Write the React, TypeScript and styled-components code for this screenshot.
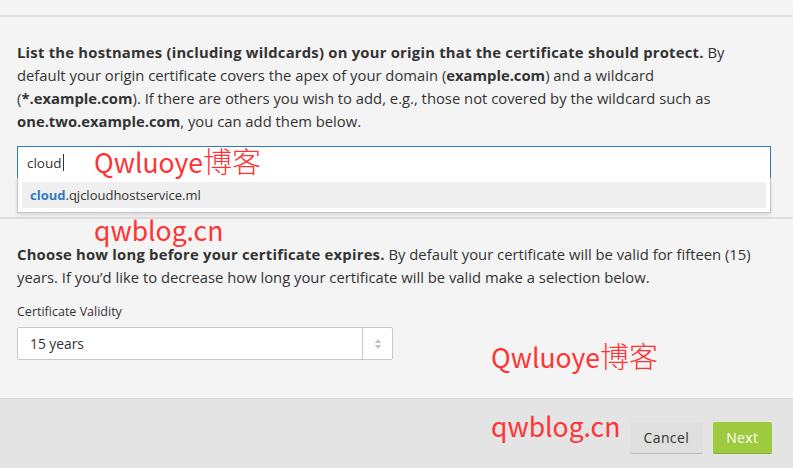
import styled, { createGlobalStyle } from "styled-components";

const GlobalStyle = createGlobalStyle`
  html, body {
    margin: 0;
    padding: 0;
    background: #f4f4f4;
  }
  body {
    font-family: "Open Sans", "Liberation Sans", sans-serif;
    color: #333;
  }
`;

const Page = styled.div`
  position: relative;
  width: 793px;
  height: 468px;
  overflow: hidden;
  display: flex;
  flex-direction: column;
  background: #f4f4f4;
`;

const TopStrip = styled.div`
  height: 15px;
  background: #f5f5f5;
  border-bottom: 2px solid #e0e0e0;
`;

const Section = styled.section<{ padTop: number; padBottom: number; divider?: boolean }>`
  padding: ${({ padTop, padBottom }) => `${padTop}px 22px ${padBottom}px 17px`};
  border-bottom: ${({ divider }) => (divider ? "2px solid #dedede" : "none")};
`;

const Text = styled.p`
  margin: 0;
  font-size: 14.8px;
  line-height: 23px;
  color: #333;

  b {
    font-weight: 700;
  }
`;

const Lead = styled.b`
  letter-spacing: 0.23px;
`;

const InputWrap = styled.div`
  position: relative;
  margin-top: 13px;
`;

const TextInput = styled.div`
  box-sizing: border-box;
  height: 32px;
  padding: 0 9px;
  display: flex;
  align-items: center;
  background: #fff;
  border: 1px solid #2f7bbf;
  border-bottom: none;
  font-size: 13.5px;
  color: #333;
`;

const Caret = styled.span`
  display: inline-block;
  width: 1px;
  height: 17px;
  margin-left: 1px;
  background: #333;
`;

const Menu = styled.div`
  position: absolute;
  left: 0;
  right: 0;
  top: 32px;
  box-sizing: border-box;
  padding: 4px;
  background: #fff;
  border: 1px solid #c4c4c4;
  border-top: none;
  box-shadow: 0 2px 4px rgba(0, 0, 0, 0.12);
`;

const MenuItem = styled.div`
  height: 26px;
  padding: 0 8px;
  display: flex;
  align-items: center;
  background: #efefef;
  font-size: 13px;
  color: #333;
`;

const Match = styled.span`
  font-weight: 700;
  color: #2f7bbf;
`;

const Label = styled.div`
  margin-top: 14px;
  font-size: 12.5px;
  line-height: 18px;
  color: #333;
`;

const Select = styled.div`
  box-sizing: border-box;
  margin-top: 6px;
  width: 376px;
  height: 33px;
  display: flex;
  background: #fff;
  border: 1px solid #c8c8c8;
  border-radius: 2px;
`;

const SelectValue = styled.div`
  flex: 1;
  display: flex;
  align-items: center;
  padding-left: 12px;
  font-size: 13.8px;
  color: #333;
`;

const SelectArrows = styled.div`
  width: 29px;
  border-left: 1px solid #c8c8c8;
  display: flex;
  align-items: center;
  justify-content: center;
`;

const Footer = styled.footer`
  flex: 1;
  display: flex;
  justify-content: flex-end;
  align-items: flex-start;
  gap: 10px;
  padding: 23px 21px 0 0;
  background: #e4e4e4;
  border-top: 1px solid #d6d6d6;
`;

const Button = styled.button<{ primary?: boolean }>`
  height: 32px;
  padding: 0 ${({ primary }) => (primary ? "13.5px" : "13.5px")};
  border: none;
  border-radius: 2px;
  border-bottom: 1px solid ${({ primary }) => (primary ? "#86ad33" : "#b9b9b9")};
  background: ${({ primary }) => (primary ? "#9dca3e" : "#dfdfdf")};
  color: ${({ primary }) => (primary ? "#fff" : "#333")};
  font-family: "Open Sans", "Liberation Sans", sans-serif;
  font-size: 14px;
  letter-spacing: 0.4px;
  cursor: pointer;
`;

const Watermark = styled.div<{ x: number; y: number }>`
  position: absolute;
  left: ${({ x }) => `${x}px`};
  top: ${({ y }) => `${y}px`};
  font-family: "Noto Sans CJK SC", "Liberation Sans", sans-serif;
  font-size: 26.5px;
  line-height: 30px;
  color: #ff3333;
  white-space: nowrap;
  pointer-events: none;
`;

const Han = styled.span`
  font-size: 29px;
  font-weight: 300;
`;

export default function App() {
  return (
    <Page>
      <GlobalStyle />
      <TopStrip />
      <Section padTop={24} padBottom={39} divider>
        <Text>
          <Lead>
            List the hostnames (including wildcards) on your origin that the
            certificate should protect.
          </Lead>{" "}
          By default your origin certificate covers the apex of your domain (
          <b>example.com</b>) and a wildcard (<b>*.example.com</b>). If there
          are others you wish to add, e.g., those not covered by the wildcard
          such as <b>one.two.example.com</b>, you can add them below.
        </Text>
        <InputWrap>
          <TextInput>
            cloud
            <Caret />
          </TextInput>
          <Menu>
            <MenuItem>
              <Match>cloud</Match>.qjcloudhostservice.ml
            </MenuItem>
          </Menu>
        </InputWrap>
      </Section>
      <Section padTop={24} padBottom={38}>
        <Text>
          <Lead>Choose how long before your certificate expires.</Lead> By
          default your certificate will be valid for fifteen (15) years. If
          you’d like to decrease how long your certificate will be valid make
          a selection below.
        </Text>
        <Label>Certificate Validity</Label>
        <Select>
          <SelectValue>15 years</SelectValue>
          <SelectArrows>
            <svg width="10" height="14" viewBox="0 0 10 14">
              <path d="M5 2 L8.5 6 L1.5 6 Z" fill="#c4c4c4" />
              <path d="M5 12 L8.5 8 L1.5 8 Z" fill="#c4c4c4" />
            </svg>
          </SelectArrows>
        </Select>
      </Section>
      <Footer>
        <Button>Cancel</Button>
        <Button primary>Next</Button>
      </Footer>
      <Watermark x={94} y={145}>
        Qwluoye<Han>博客</Han>
      </Watermark>
      <Watermark x={94} y={215}>qwblog.cn</Watermark>
      <Watermark x={491} y={340}>
        Qwluoye<Han>博客</Han>
      </Watermark>
      <Watermark x={491} y={411}>qwblog.cn</Watermark>
    </Page>
  );
}
